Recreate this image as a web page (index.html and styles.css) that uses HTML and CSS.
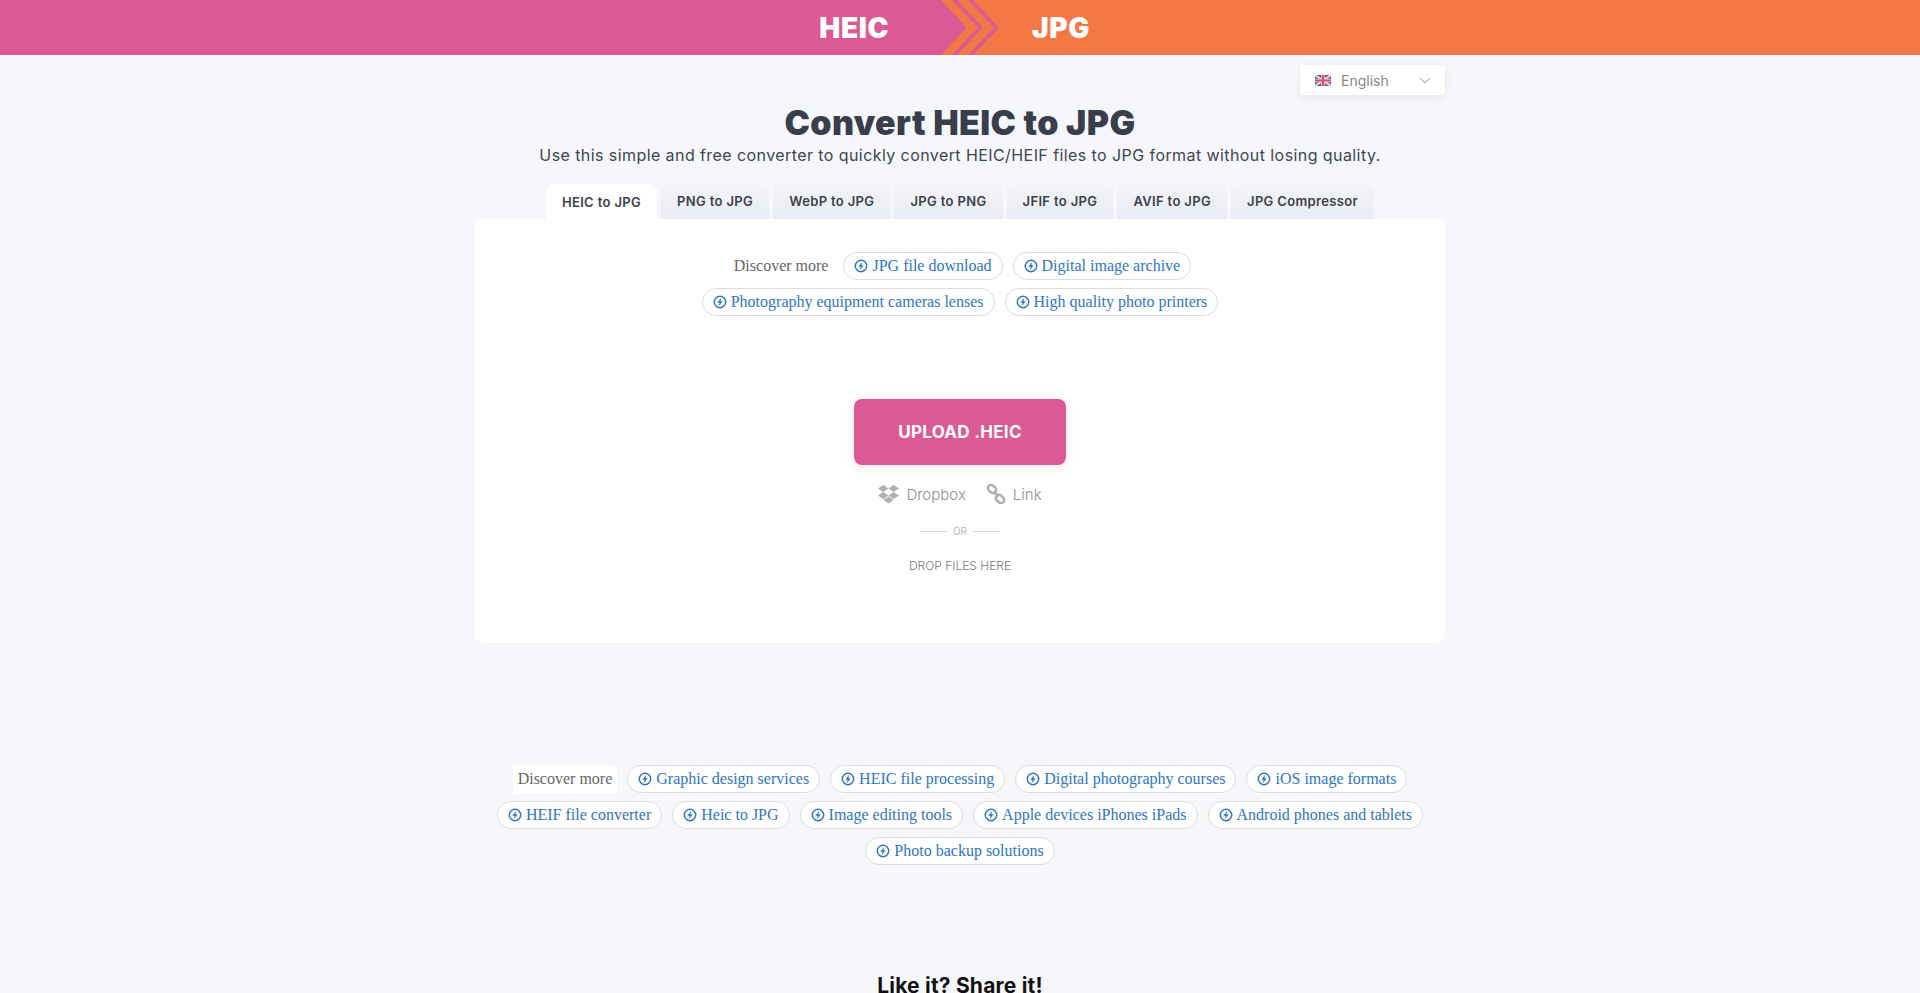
FILE: index.html
```html
<!DOCTYPE html>
<html lang="en">
<head>
    <meta charset="UTF-8">
    <meta name="viewport" content="width=device-width, initial-scale=1.0">
    <title>Convert HEIC to JPG</title>
    <link rel="stylesheet" href="styles.css">
</head>
<body>
    <svg class="defs" width="0" height="0">
        <symbol id="bolt" viewBox="0 0 14 14">
            <circle cx="7" cy="7" r="5.7" fill="none" stroke="currentColor" stroke-width="1.5"/>
            <path d="M8.300 2.800 4.300 7.800h2.300l-.9 3.400 4-5h-2.300z" fill="currentColor"/>
        </symbol>
    </svg>

    <!-- Top banner -->
    <header class="banner">
        <div class="banner-side banner-from"><span>HEIC</span></div>
        <div class="banner-side banner-to"><span>JPG</span></div>
        <svg class="banner-arrows" width="80" height="55" viewBox="0 0 80 55">
            <path d="M0 0H21L47 27.5 21 55H0z" fill="#db5a96"/>
            <path d="M21 0H32L58 27.5 32 55H21L47 27.5z" fill="#f47746"/>
            <path d="M32 0H37L63 27.5 37 55H32L58 27.5z" fill="#db5a96"/>
            <path d="M37 0H48L74 27.5 48 55H37L63 27.5z" fill="#f47746"/>
            <path d="M48 0H53L79 27.5 53 55H48L74 27.5z" fill="#db5a96"/>
        </svg>
    </header>

    <main class="page">
        <div class="lang-row">
            <div class="lang-select">
                <svg class="flag" width="16" height="11" viewBox="0 0 16 11">
                    <rect width="16" height="11" fill="#5a5a94"/>
                    <path d="M0 0 16 11M16 0 0 11" stroke="#f0d6de" stroke-width="2"/>
                    <path d="M8 0V11M0 5.500H16" stroke="#f0d6de" stroke-width="3.600"/>
                    <path d="M8 0V11M0 5.500H16" stroke="#d8506a" stroke-width="2"/>
                </svg>
                <span class="lang-name">English</span>
                <svg class="lang-caret" width="12" height="7" viewBox="0 0 12 7">
                    <path d="M1 1 6 6 11 1" fill="none" stroke="#999" stroke-width="1"/>
                </svg>
            </div>
        </div>

        <h1 class="title">Convert HEIC to JPG</h1>
        <p class="subtitle">Use this simple and free converter to quickly convert HEIC/HEIF files to JPG format without losing quality.</p>

        <nav class="tabs">
            <a class="tab tab-active">HEIC to JPG</a>
            <a class="tab">PNG to JPG</a>
            <a class="tab">WebP to JPG</a>
            <a class="tab">JPG to PNG</a>
            <a class="tab">JFIF to JPG</a>
            <a class="tab">AVIF to JPG</a>
            <a class="tab">JPG Compressor</a>
        </nav>

        <section class="card">
            <div class="chips chips-card">
                <span class="chips-label">Discover more</span>
                <a class="chip"><svg class="chip-icon"><use href="#bolt"/></svg>JPG file download</a>
                <a class="chip"><svg class="chip-icon"><use href="#bolt"/></svg>Digital image archive</a>
                <a class="chip"><svg class="chip-icon"><use href="#bolt"/></svg>Photography equipment cameras lenses</a>
                <a class="chip"><svg class="chip-icon"><use href="#bolt"/></svg>High quality photo printers</a>
            </div>

            <div class="upload">
                <button class="upload-button">UPLOAD .HEIC</button>
                <div class="sources">
                    <a class="source">
                        <svg width="21" height="19" viewBox="0 0 21 19" fill="#aeb1b3">
                            <path d="M5.300 0 0 3.500 5.300 7 10.500 3.500zM15.700 0 10.500 3.500 15.700 7 21 3.500zM0 10.500 5.300 14 10.500 10.500 5.300 7zM15.700 7 10.500 10.500 15.700 14 21 10.500zM5.300 15 10.500 18.500 15.700 15 10.500 11.600z"/>
                        </svg>
                        Dropbox
                    </a>
                    <a class="source">
                        <svg width="20" height="20" viewBox="0 0 20 20" fill="none" stroke="#aeb1b3" stroke-width="2.600">
                            <rect x="1.500" y="1.800" width="9" height="6.400" rx="3.200" transform="rotate(45 6 5)"/>
                            <rect x="9.500" y="11.800" width="9" height="6.400" rx="3.200" transform="rotate(45 14 15)"/>
                            <path d="M7.500 7.500 12.500 12.500"/>
                        </svg>
                        Link
                    </a>
                </div>
                <div class="or-line"><span>OR</span></div>
                <div class="drop-text">DROP FILES HERE</div>
            </div>
        </section>

        <div class="chips chips-page">
            <span class="chips-label chips-label-white">Discover more</span>
            <a class="chip"><svg class="chip-icon"><use href="#bolt"/></svg>Graphic design services</a>
            <a class="chip"><svg class="chip-icon"><use href="#bolt"/></svg>HEIC file processing</a>
            <a class="chip"><svg class="chip-icon"><use href="#bolt"/></svg>Digital photography courses</a>
            <a class="chip"><svg class="chip-icon"><use href="#bolt"/></svg>iOS image formats</a>
            <a class="chip"><svg class="chip-icon"><use href="#bolt"/></svg>HEIF file converter</a>
            <a class="chip"><svg class="chip-icon"><use href="#bolt"/></svg>Heic to JPG</a>
            <a class="chip"><svg class="chip-icon"><use href="#bolt"/></svg>Image editing tools</a>
            <a class="chip"><svg class="chip-icon"><use href="#bolt"/></svg>Apple devices iPhones iPads</a>
            <a class="chip"><svg class="chip-icon"><use href="#bolt"/></svg>Android phones and tablets</a>
            <a class="chip"><svg class="chip-icon"><use href="#bolt"/></svg>Photo backup solutions</a>
        </div>

        <h2 class="share-title">Like it? Share it!</h2>
    </main>
</body>
</html>
```

FILE: styles.css
```css
html {
    height: 100vh;
    overflow: hidden;
}
body {
    margin: 0;
    background-color: #f6f7fb;
    color: #383e4b;
    font-family: Inter, "Open Sans", sans-serif;
}
.defs {
    display: block;
    height: 0;
}

/* banner */
.banner {
    position: relative;
    display: flex;
    height: 55px;
    color: white;
    font-size: 28px;
    font-weight: 900;
    letter-spacing: 0.6px;
}
.banner-side {
    display: flex;
    align-items: center;
    width: 50%;
}
.banner-from {
    background-color: #db5a96;
    justify-content: flex-end;
}
.banner-from span {
    margin-right: 71px;
}
.banner-to {
    background-color: #f47746;
}
.banner-to span {
    margin-left: 72px;
}
.banner-arrows {
    position: absolute;
    left: 920px;
    top: 0;
}

.page {
    width: 970px;
    margin: 0 auto;
    text-align: center;
}

/* language */
.lang-row {
    display: flex;
    justify-content: flex-end;
    padding-top: 10px;
}
.lang-select {
    display: flex;
    align-items: center;
    width: 145px;
    height: 30px;
    box-sizing: border-box;
    padding: 0 14px 0 15px;
    background-color: white;
    border-radius: 4px;
    box-shadow: 0 2px 8px rgba(0, 0, 0, 0.07);
    font-size: 14px;
    color: #888;
}
.lang-name {
    margin-left: 10px;
}
.lang-caret {
    margin-left: auto;
}

.title {
    margin: 8px 0 0;
    font-size: 34px;
    line-height: 40px;
    font-weight: 900;
    letter-spacing: 0.4px;
}
.subtitle {
    margin: 0;
    font-size: 16px;
    line-height: 24px;
    letter-spacing: 0.42px;
    color: #40454f;
}

/* tabs */
.tabs {
    display: flex;
    justify-content: center;
    gap: 4px;
    height: 35px;
    margin-top: 17px;
    align-items: flex-end;
}
.tab {
    display: flex;
    align-items: center;
    justify-content: center;
    height: 35px;
    padding: 0 16px 2px;
    box-sizing: border-box;
    background: linear-gradient(#f3f4f9, #eaecf3);
    border-radius: 8px 8px 0 0;
    font-size: 13px;
    font-weight: 600;
    letter-spacing: 0.35px;
    color: #3c414c;
}
.tab-active {
    background: white;
    padding-bottom: 0;
}

.card {
    height: 424px;
    background-color: white;
    border-radius: 8px;
    box-shadow: 0 2px 10px rgba(0, 0, 0, 0.02);
}

/* chips */
.chips {
    display: flex;
    flex-wrap: wrap;
    justify-content: center;
    gap: 8px 10px;
    font-family: "Liberation Serif", serif;
    font-size: 16px;
}
.chips-card {
    width: 560px;
    margin: 0 auto;
    padding-top: 33px;
}
.chips-page {
    margin-top: 122px;
}
.chips-label {
    display: flex;
    align-items: center;
    height: 28px;
    padding: 0 5px;
    color: #666;
}
.chips-label-white {
    background-color: white;
}
.chip {
    display: flex;
    align-items: center;
    height: 28px;
    box-sizing: border-box;
    padding: 0 10px;
    border: 1px solid #dcdcde;
    border-radius: 14px;
    background-color: white;
    color: #2f74c9;
}
.chip-icon {
    width: 14px;
    height: 14px;
    margin-right: 4px;
}

/* upload area */
.upload {
    display: flex;
    flex-direction: column;
    align-items: center;
    padding-top: 83px;
}
.upload-button {
    width: 212px;
    height: 66px;
    border: none;
    border-radius: 8px;
    background-color: #db5a96;
    color: white;
    font-family: Inter, sans-serif;
    font-size: 17px;
    font-weight: 700;
    letter-spacing: 0.3px;
    box-shadow: 0 3px 12px rgba(0, 0, 0, 0.08);
}
.sources {
    display: flex;
    gap: 20px;
    margin-top: 17px;
    font-size: 15px;
    font-weight: 300;
    color: #8e9194;
}
.source {
    display: flex;
    align-items: center;
    gap: 7px;
    height: 24px;
}
.or-line {
    display: flex;
    align-items: center;
    gap: 6px;
    margin-top: 18px;
    height: 14px;
    font-size: 10px;
    color: #b4b6b9;
}
.or-line::before,
.or-line::after {
    content: "";
    width: 27px;
    height: 1px;
    background-color: #d4d5d8;
}
.drop-text {
    margin-top: 20px;
    font-size: 12px;
    font-weight: 300;
    color: #777;
}

.share-title {
    margin: 107px 0 0;
    font-size: 21px;
    line-height: 28px;
    font-weight: 700;
    letter-spacing: 0.2px;
    color: #111;
}
```
